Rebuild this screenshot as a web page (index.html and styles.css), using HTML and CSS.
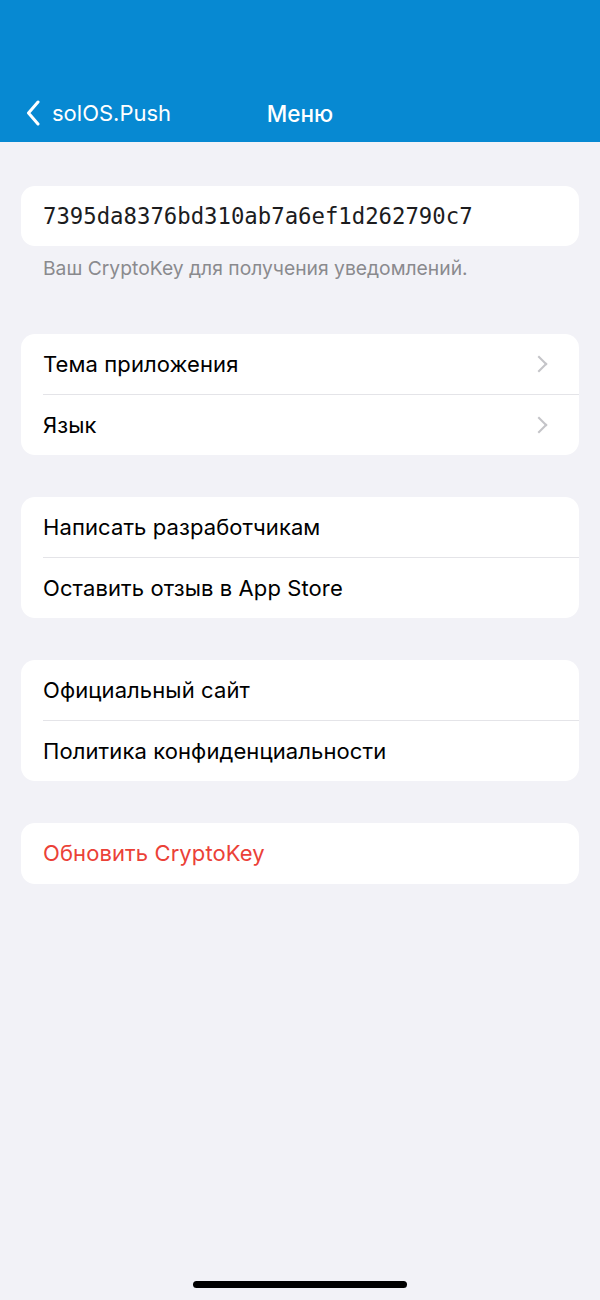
FILE: index.html
```html
<!DOCTYPE html>
<html lang="ru">
<head>
  <meta charset="UTF-8">
  <meta name="viewport" content="width=device-width, initial-scale=1.0">
  <title>Меню</title>
  <link rel="stylesheet" href="styles.css">
</head>
<body>

  <div class="screen">
    <!-- Навигация -->
    <header class="navbar">
      <a class="back" href="#">
        <svg class="back-icon" width="14" height="26" viewBox="0 0 14 26">
          <path d="M12 2 L2.5 13 L12 24" fill="none" stroke="#fff" stroke-width="3" stroke-linecap="round" stroke-linejoin="round"/>
        </svg>
        <span>solOS.Push</span>
      </a>
      <div class="title">Меню</div>
    </header>

    <main class="content">
      <div class="group">
        <div class="card">
          <div class="row key">7395da8376bd310ab7a6ef1d262790c7</div>
        </div>
        <p class="note">Ваш CryptoKey для получения уведомлений.</p>
      </div>

      <div class="card">
        <div class="row">Тема приложения <span class="chevron"></span></div>
        <div class="row">Язык <span class="chevron"></span></div>
      </div>

      <div class="card">
        <div class="row">Написать разработчикам</div>
        <div class="row">Оставить отзыв в App Store</div>
      </div>

      <div class="card">
        <div class="row">Официальный сайт</div>
        <div class="row">Политика конфиденциальности</div>
      </div>

      <div class="card">
        <div class="row danger">Обновить CryptoKey</div>
      </div>
    </main>

    <div class="home-bar"></div>
  </div>

</body>
</html>
```

FILE: styles.css
```css
/* General */
body {
  margin: 0;
  padding: 0;
  font-family: 'Inter', 'Roboto', sans-serif;
  background-color: #f2f2f7;
  color: #000;
}

.screen {
  height: 1300px;
  display: flex;
  flex-direction: column;
}

/* Навигация */
.navbar {
  height: 142px;
  background-color: #0789d2;
  display: flex;
  align-items: flex-end;
  justify-content: center;
  padding-bottom: 14px;
  box-sizing: border-box;
  position: relative;
  color: #fff;
}

.back {
  position: absolute;
  left: 26px;
  bottom: 16px;
  display: flex;
  align-items: center;
  gap: 12px;
  color: #fff;
  text-decoration: none;
  font-size: 22px;
}

.title {
  font-size: 22.5px;
  font-weight: 500;
  line-height: 28px;
}

/* Contenido */
.content {
  flex: 1;
  padding: 44px 21px 0;
  display: flex;
  flex-direction: column;
  gap: 42px;
}

.card {
  background-color: #fff;
  border-radius: 14px;
  overflow: hidden;
}

.row {
  height: 60.5px;
  display: flex;
  align-items: center;
  justify-content: space-between;
  margin-left: 22px;
  padding-right: 32px;
  font-size: 22px;
  letter-spacing: 0.1px;
  border-bottom: 1px solid #e4e4e8;
  box-sizing: border-box;
}

.row:last-child {
  border-bottom: none;
}

.key {
  height: 60px;
  font-family: 'DejaVu Sans Mono', monospace;
  font-size: 22.3px;
  letter-spacing: 0;
  color: #1c1c1e;
}

.note {
  margin: 12px 0 0 22px;
  font-size: 19.3px;
  line-height: 20px;
  color: #8a8a8e;
}

.group {
  margin-bottom: 14px;
}

.chevron {
  width: 10px;
  height: 10px;
  border-top: 2px solid #c4c4c8;
  border-right: 2px solid #c4c4c8;
  transform: rotate(45deg);
  margin-right: 2px;
}

.danger {
  color: #eb4137;
}

.home-bar {
  width: 214px;
  height: 7px;
  border-radius: 4px;
  background-color: #000;
  margin: 0 auto 12px;
}
```
